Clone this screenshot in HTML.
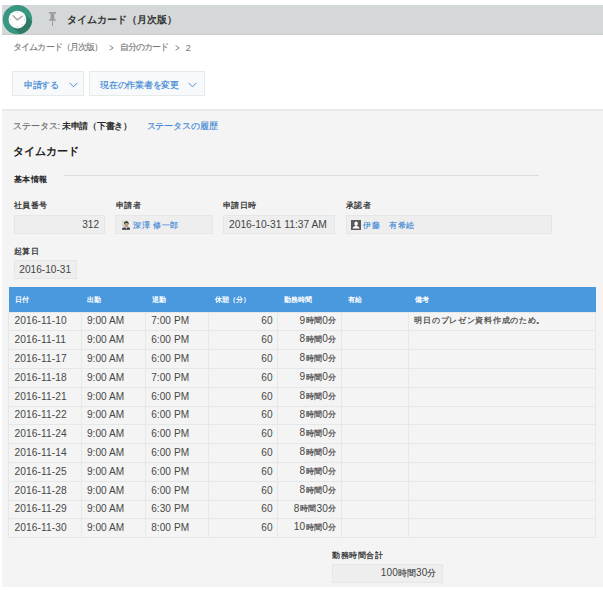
<!DOCTYPE html>
<html><head><meta charset="utf-8">
<style>
*{box-sizing:border-box;margin:0;padding:0}
html,body{width:603px;height:590px;overflow:hidden;background:#fff}
body{position:relative;font-family:"Liberation Sans",sans-serif;color:#333;font-size:10px}
.a{position:absolute;white-space:nowrap;line-height:1}
.j{font-size:8.8px;-webkit-text-stroke:0.15px currentColor}
b,.a.bd{-webkit-text-stroke:0}
.lb{font-size:8.4px;letter-spacing:0.6px;margin-top:0.6px;-webkit-text-stroke:0.22px currentColor;color:#2b2b2b}
#hdr{position:absolute;left:2px;top:5px;width:601px;height:29.5px;background:#d5d8d8;box-shadow:inset 0 -1.5px 1px -0.5px #c9cccc}
#content{position:absolute;left:2px;top:108.8px;width:601px;height:478px;background:#f4f4f4;border-top:2px solid #e8e9ea}
.btn{position:absolute;top:71.3px;height:25.2px;background:#f7f9fa;border:1px solid #e6eaeb;color:#3a86d4}
.fld{position:absolute;background:#eeeeee;border:1px solid #e6e6e6;color:#444}
#tbl{position:absolute;left:8px;top:287px;width:588px;border-collapse:collapse}
#tbl th{background:#4a98de;color:#fff;height:25px;font-size:7px;font-weight:bold;text-align:left;padding:1.5px 0 0 6px}
#tbl td{border:1px solid #e5e8e9;padding:0 5px 1.2px;font-size:10.1px;letter-spacing:0.05px;color:#474747;white-space:nowrap}
#tbl td .j{font-size:8.4px;letter-spacing:0.3px;margin-left:0.5px;position:relative;top:-0.6px;-webkit-text-stroke:0.22px currentColor}
#tbl td.d{font-size:10.2px;letter-spacing:0.1px;padding-left:5.5px}
#tbl td.r{text-align:right;padding-right:4.7px}
</style></head><body>
<div id="hdr"></div>
<!-- clock icon -->
<svg class="a" style="left:0;top:0" width="40" height="40" viewBox="0 0 40 40">
  <defs><clipPath id="cc"><circle cx="17.45" cy="19.6" r="14.7"/></clipPath></defs>
  <circle cx="17.45" cy="19.6" r="14.7" fill="#389681"/>
  <g clip-path="url(#cc)"><path d="M23.8 13.2 L40 29.5 L40 40 L26 40 L10.8 25.6 Z" fill="#2e7a67"/></g>
  <circle cx="17.45" cy="19.55" r="8.9" fill="#fff"/>
  <g stroke="#aeb3b3" stroke-width="0.9">
   <path d="M17.35 11.5 V12.8 M17.35 26.1 V27.3 M9.5 19.35 H10.8 M23.9 19.35 H25.2 M11.7 24.9 l0.8 -0.8 M23 24.9 l-0.8 -0.8"/>
  </g>
  <path d="M13.1 15.8 L17.3 19.9 L22.1 16.3" stroke="#a6acac" stroke-width="1.5" fill="none" stroke-linecap="round" stroke-linejoin="round"/>
</svg>
<!-- pin -->
<svg class="a" style="left:48px;top:11px" width="9" height="16" viewBox="0 0 9 16">
  <rect x="0.9" y="1" width="7.1" height="1.6" fill="#9b9b9b"/>
  <rect x="2.6" y="2.6" width="3.7" height="5.6" fill="#9b9b9b"/>
  <path d="M2.6 7.6 L0.9 9.2 V9.8 H8 V9.2 L6.3 7.6Z" fill="#9b9b9b"/>
  <rect x="4" y="9.7" width="1" height="5.1" fill="#9b9b9b"/>
</svg>
<div class="a" style="left:67.3px;top:14.6px;font-size:10.1px;font-weight:bold;color:#333">タイムカード（月次版）</div>

<div class="a" style="left:13.2px;top:43px;font-size:9px;letter-spacing:-0.9px;color:#777;-webkit-text-stroke:0.12px #777">タイムカード（月次版）</div>
<svg class="a" style="left:108.8px;top:45.4px" width="5" height="6" viewBox="0 0 5 6"><path d="M0.6 0.6 L4.2 2.9 L0.6 5.2" stroke="#7f7f7f" stroke-width="0.95" fill="none"/></svg>
<div class="a" style="left:119.6px;top:43px;font-size:9px;letter-spacing:-0.9px;color:#777;-webkit-text-stroke:0.12px #777">自分のカード</div>
<svg class="a" style="left:174.8px;top:45.4px" width="5" height="6" viewBox="0 0 5 6"><path d="M0.6 0.6 L4.2 2.9 L0.6 5.2" stroke="#7f7f7f" stroke-width="0.95" fill="none"/></svg>
<div class="a" style="left:185.6px;top:42.6px;font-size:9.8px;color:#7a7a7a">2</div>

<div class="btn" style="left:12px;width:71.6px"><span class="a j" style="left:11px;top:8.3px;letter-spacing:-0.4px">申請する</span>
<svg class="a" style="left:55.6px;top:9.8px" width="9" height="6" viewBox="0 0 9 6"><path d="M0.5 0.8 L4.5 4.8 L8.5 0.8" stroke="#3a86d4" stroke-width="0.9" fill="none"/></svg></div>
<div class="btn" style="left:89px;width:115.6px"><span class="a j" style="left:10px;top:8.3px;letter-spacing:-0.25px">現在の作業者を変更</span>
<svg class="a" style="left:98.4px;top:9.8px" width="9" height="6" viewBox="0 0 9 6"><path d="M0.5 0.8 L4.5 4.8 L8.5 0.8" stroke="#3a86d4" stroke-width="0.9" fill="none"/></svg></div>

<div id="content"></div>

<div class="a j" style="left:13.4px;top:122.4px;color:#6a6a6a"><span style="letter-spacing:-0.2px">ステータス:</span> <b style="color:#2a2a2a;font-size:8.6px;letter-spacing:-0.3px">未申請（下書き）</b></div>
<div class="a j" style="left:146.5px;top:122.2px;color:#3a86d4;letter-spacing:-0.05px">ステータスの履歴</div>
<div class="a" style="left:12.7px;top:145.6px;font-size:10.9px;font-weight:bold;color:#222">タイムカード</div>
<div class="a j lb bd" style="left:13.5px;top:174px;font-weight:bold;color:#222">基本情報</div>
<div class="a" style="left:64px;top:175px;width:475px;height:1px;background:#dcdcdc"></div>

<div class="a j lb" style="left:13.5px;top:200.5px">社員番号</div>
<div class="fld" style="left:13.5px;top:215px;width:91.5px;height:19px"><span class="a" style="right:5px;top:3.6px;font-size:10.1px">312</span></div>
<div class="a j lb" style="left:115.5px;top:200.5px">申請者</div>
<div class="fld" style="left:115px;top:215px;width:97.5px;height:19px">
 <svg class="a" style="left:5.9px;top:4.3px" width="8.6" height="10.2" viewBox="0 0 9 10"><rect width="9" height="10" fill="#d9d9d4"/><rect x="6.5" width="2.5" height="7" fill="#eef0ee"/><ellipse cx="4.6" cy="4.6" rx="2.2" ry="2.6" fill="#b89c88"/><path d="M2.2 4.4 Q2 1.2 4.6 1.1 Q7.2 1.2 7 4.4 Q6.6 2.6 4.6 2.6 Q2.7 2.6 2.2 4.4Z" fill="#2a2a2a"/><path d="M0 10 L0 8.6 Q1.5 7.4 3.6 7.2 L4.6 8.6 L5.6 7.2 Q7.6 7.4 9 8.6 L9 10Z" fill="#3a3d44"/><path d="M3.6 7.2 L4.6 8.8 L5.6 7.2Z" fill="#f2f2f2"/></svg>
 <span class="a j" style="left:17px;top:4.8px;color:#3a86d4;font-size:8.4px;letter-spacing:0.6px">深澤&nbsp;修一郎</span></div>
<div class="a j lb" style="left:222.5px;top:200.5px">申請日時</div>
<div class="fld" style="left:222.5px;top:215px;width:112.5px;height:19px"><span class="a" style="left:5.5px;top:3.6px;font-size:10.25px">2016-10-31 11:37 AM</span></div>
<div class="a j lb" style="left:345.5px;top:200.5px">承認者</div>
<div class="fld" style="left:345.5px;top:215px;width:206px;height:19px">
 <svg class="a" style="left:4.6px;top:3.8px" width="10" height="10.1" viewBox="0 0 10 10"><rect width="10" height="10" fill="#585858"/><ellipse cx="5.1" cy="3.6" rx="1.75" ry="2.1" fill="#fff"/><path d="M1.6 8.5 Q1.7 6.6 3.9 6.1 L4.3 5.4 L5.9 5.4 L6.3 6.1 Q8.5 6.6 8.6 8.5 Z" fill="#fff"/></svg>
 <span class="a j" style="left:16.8px;top:4.8px;color:#3a86d4;font-size:8.4px;letter-spacing:0.6px">伊藤　有希絵</span></div>

<div class="a j lb" style="left:13.5px;top:246px">起算日</div>
<div class="fld" style="left:13.5px;top:260px;width:63px;height:19px"><span class="a" style="left:4.8px;top:3.7px;font-size:10.15px">2016-10-31</span></div>

<table id="tbl">
<colgroup><col style="width:72.9px"><col style="width:64.3px"><col style="width:63.2px"><col style="width:69px"><col style="width:64px"><col style="width:67px"><col></colgroup>
<tr><th>日付</th><th>出勤</th><th>退勤</th><th>休憩（分）</th><th>勤務時間</th><th>有給</th><th>備考</th></tr>
<tr style="height:18.5px"><td class="d">2016-11-10</td><td>9:00 AM</td><td>7:00 PM</td><td class="r">60</td><td class="r">9<span class="j">時間</span>0<span class="j">分</span></td><td></td><td style="padding-left:5px"><span class="j" style="letter-spacing:0.72px;margin-left:0">明日のプレゼン資料作成のため。</span></td></tr>
<tr style="height:19px"><td class="d">2016-11-11</td><td>9:00 AM</td><td>6:00 PM</td><td class="r">60</td><td class="r">8<span class="j">時間</span>0<span class="j">分</span></td><td></td><td></td></tr>
<tr style="height:19px"><td class="d">2016-11-17</td><td>9:00 AM</td><td>6:00 PM</td><td class="r">60</td><td class="r">8<span class="j">時間</span>0<span class="j">分</span></td><td></td><td></td></tr>
<tr style="height:19px"><td class="d">2016-11-18</td><td>9:00 AM</td><td>7:00 PM</td><td class="r">60</td><td class="r">9<span class="j">時間</span>0<span class="j">分</span></td><td></td><td></td></tr>
<tr style="height:19px"><td class="d">2016-11-21</td><td>9:00 AM</td><td>6:00 PM</td><td class="r">60</td><td class="r">8<span class="j">時間</span>0<span class="j">分</span></td><td></td><td></td></tr>
<tr style="height:18px"><td class="d">2016-11-22</td><td>9:00 AM</td><td>6:00 PM</td><td class="r">60</td><td class="r">8<span class="j">時間</span>0<span class="j">分</span></td><td></td><td></td></tr>
<tr style="height:19px"><td class="d">2016-11-24</td><td>9:00 AM</td><td>6:00 PM</td><td class="r">60</td><td class="r">8<span class="j">時間</span>0<span class="j">分</span></td><td></td><td></td></tr>
<tr style="height:19px"><td class="d">2016-11-14</td><td>9:00 AM</td><td>6:00 PM</td><td class="r">60</td><td class="r">8<span class="j">時間</span>0<span class="j">分</span></td><td></td><td></td></tr>
<tr style="height:19px"><td class="d">2016-11-25</td><td>9:00 AM</td><td>6:00 PM</td><td class="r">60</td><td class="r">8<span class="j">時間</span>0<span class="j">分</span></td><td></td><td></td></tr>
<tr style="height:19px"><td class="d">2016-11-28</td><td>9:00 AM</td><td>6:00 PM</td><td class="r">60</td><td class="r">8<span class="j">時間</span>0<span class="j">分</span></td><td></td><td></td></tr>
<tr style="height:18px"><td class="d">2016-11-29</td><td>9:00 AM</td><td>6:30 PM</td><td class="r">60</td><td class="r">8<span class="j">時間</span>30<span class="j">分</span></td><td></td><td></td></tr>
<tr style="height:19px"><td class="d">2016-11-30</td><td>9:00 AM</td><td>8:00 PM</td><td class="r">60</td><td class="r">10<span class="j">時間</span>0<span class="j">分</span></td><td></td><td></td></tr>
</table>

<div class="a j lb" style="left:332px;top:550px">勤務時間合計</div>
<div class="fld" style="left:332px;top:564px;width:110.5px;height:19px"><span class="a" style="right:5px;top:3px;letter-spacing:0.1px">100<span class="j" style="font-size:9.2px">時間</span>30<span class="j" style="font-size:9.2px">分</span></span></div>
</body></html>
